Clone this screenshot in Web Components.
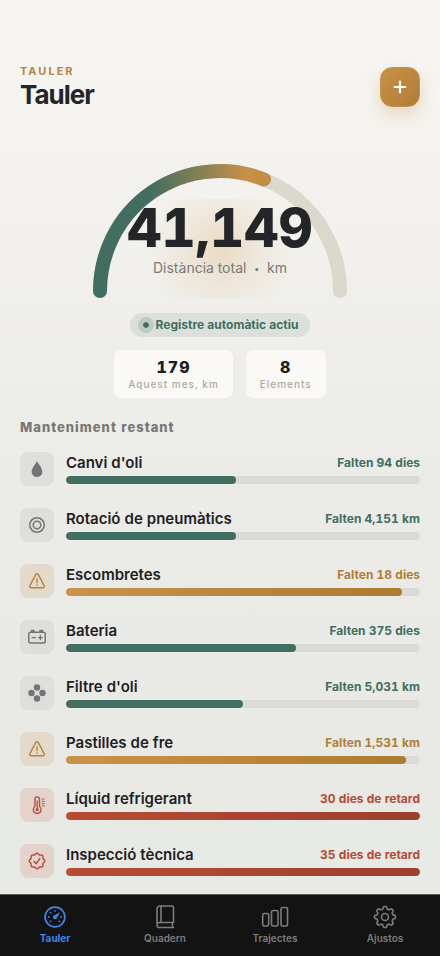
<!DOCTYPE html>
<html lang="ca">
<head>
<meta charset="utf-8">
<meta name="viewport" content="width=device-width, initial-scale=1">
<title>Tauler</title>
<style>
  :root {
    --ink: #242529;
    --green: #426d61;
    --gold: #b07e38;
    --red: #b34a36;
  }
  html { height: 100%; }
  body { margin: 0; min-height: 100%; font-family: Inter, "Liberation Sans", sans-serif; font-variant-numeric: tabular-nums; font-optical-sizing: none; color: var(--ink); background: #e9eae5; }
</style>
</head>
<body>
<dashboard-app></dashboard-app>

<script>
// Closed wavy outline with eight lobes; a higher sharpness squares the lobes off into teeth.
function lobes(radius, depth, sharpness, phase) {
  const points = [];
  for (let i = 0; i < 160; i++) {
    const a = i / 160 * Math.PI * 2;
    const wave = Math.tanh(Math.cos(8 * a + phase) * sharpness) / Math.tanh(sharpness);
    const r = radius + depth * wave;
    points.push((12 + r * Math.sin(a)).toFixed(2) + " " + (12 - r * Math.cos(a)).toFixed(2));
  }
  return "M" + points.join("L") + "Z";
}

const ICONS = {
  plus: '<path d="M12 5.500v13M5.500 12h13" stroke-width="2.600"/>',
  drop: '<path d="M12 3.200C13.500 6.500 17.800 10.800 17.800 15.200a5.800 5.600 0 0 1-11.600 0C6.200 10.800 10.500 6.500 12 3.200Z" fill="currentColor" stroke="none"/>',
  tire: '<circle cx="12" cy="12" r="7.900"/><circle cx="12" cy="12" r="4.100"/>',
  warn: '<path d="M10.700 4.700 4.200 17.200a1.500 1.500 0 0 0 1.300 2.200h13a1.500 1.500 0 0 0 1.300-2.200L13.300 4.700a1.500 1.500 0 0 0-2.600 0Z"/><path d="M12 9.500v4.300M12 16.400v.3" stroke-width="1.500"/>',
  battery: '<rect x="3" y="6.800" width="18" height="11.700" rx="2.200"/><path d="M6 6.300V5h2.700v1.300M15.300 6.300V5H18v1.300" fill="currentColor"/><path d="M6.700 12.700h3.600M13.700 12.700h4M15.700 10.700v4" stroke-width="1.500"/>',
  filter: '<g fill="currentColor" stroke="none"><circle cx="12" cy="6" r="3.500"/><circle cx="6" cy="12" r="3.500"/><circle cx="18" cy="12" r="3.500"/><circle cx="12" cy="18" r="3.500"/></g>',
  thermo: '<path d="M9.700 13.700V5.700a2.500 2.500 0 0 1 5 0v8a4.200 4.200 0 1 1-5 0Z" stroke-width="1.500"/><circle cx="12.200" cy="17" r="1.700" fill="currentColor" stroke="none"/><path d="M12.200 7.500v9" stroke-width="1.400"/><path d="M17.500 5.500h2.500M17.500 8h2.500M17.500 10.500h2.500M17.500 13h2.500" stroke-width="1"/>',
  seal: `<path d="${lobes(7.8, .7, .6, 0)}"/><path d="m8.800 12.600 2.300 2.500 4-5.800"/>`,
  gauge: '<circle cx="12" cy="12" r="9.900" stroke-width="1.700"/><path d="m17 7.300-3.300 5.900a2 2 0 1 1-2.600-2.800Z" fill="currentColor" stroke="none"/><g fill="currentColor" stroke="none"><circle cx="12" cy="5.800" r=".9"/><circle cx="7.600" cy="7.600" r=".9"/><circle cx="5.800" cy="12" r=".9"/><circle cx="7.600" cy="16.400" r=".9"/><circle cx="18.200" cy="12" r=".9"/><circle cx="16.400" cy="16.400" r=".9"/></g>',
  book: '<path d="M20.500 17.500V2.600a1.600 1.600 0 0 0-1.600-1.600H6.500A2.500 2.500 0 0 0 4 3.500v16.700A2.300 2.300 0 0 0 6.300 22.500h14.200M20.500 17.500H6.200A2.200 2.200 0 0 0 4 19.700M8 1v16.300M19.500 17.700v4.600"/>',
  bars: '<rect x="-.3" y="8.500" width="6" height="12.500" rx="1.500"/><rect x="8.500" y="5.500" width="6.500" height="15.500" rx="1.500"/><rect x="18" y="2.500" width="6.500" height="18.500" rx="1.500"/>',
  gear: `<circle cx="12" cy="12" r="3.500"/><path d="${lobes(9.3, 1.2, 2.4, 0)}"/>`
};

function define(name, build) {
  customElements.define(name, class extends HTMLElement {
    connectedCallback() {
      if (this.shadowRoot) return;
      this.attachShadow({ mode: "open" }).innerHTML = build(this);
    }
  });
}

define("app-icon", el => `
  <style>
    :host { display: inline-flex; width: 22px; height: 22px; }
    svg { width: 100%; height: 100%; overflow: visible; fill: none; stroke: currentColor; stroke-width: 1.600; stroke-linecap: round; stroke-linejoin: round; }
  </style>
  <svg viewBox="0 0 24 24" aria-hidden="true">${ICONS[el.getAttribute("name")]}</svg>`);

define("page-header", () => `
  <style>
    :host { display: flex; justify-content: space-between; align-items: center; }
    .titles { padding-top: 2px; }
    p { margin: 0; font-size: 11px; line-height: 14px; font-weight: 700; letter-spacing: 2px; color: #b5843f; text-transform: uppercase; }
    h1 { margin: 0; font-size: 26px; line-height: 34px; font-weight: 700; letter-spacing: -1px; }
    button { display: grid; place-items: center; width: 40px; height: 40px; padding: 0; border: 1px solid #c4934f; border-radius: 12px; color: #fff;
      background: linear-gradient(135deg, #c99148, #b07c34); box-shadow: 0 8px 16px rgba(200, 145, 72, .28); }
    app-icon { width: 20px; height: 20px; }
  </style>
  <div class="titles"><p>Tauler</p><h1>Tauler</h1></div>
  <button type="button" aria-label="Afegeix"><app-icon name="plus"></app-icon></button>`);

define("distance-gauge", () => `
  <style>
    :host { display: grid; justify-items: center; }
    svg, .reading { grid-area: 1 / 1; }
    svg { width: 256px; height: 136px; overflow: visible; fill: none; stroke-width: 14; stroke-linecap: round; }
    .reading { align-self: end; display: grid; justify-items: center; align-content: start; width: 200px; height: 100px; z-index: 1;
      background: radial-gradient(circle 74px at 50% 50%, rgba(222, 180, 118, .36), rgba(226, 190, 140, .17) 50%, rgba(230, 200, 150, 0)); }
    strong { font-size: 53px; line-height: 58px; font-weight: 800; }
    span { padding-top: 1px; font-size: 14px; line-height: 20px; color: #7b7a78; white-space: pre; }
    small { font-size: 10px; vertical-align: 1px; }
  </style>
  <svg viewBox="0 0 256 136" aria-hidden="true">
    <defs><linearGradient id="g" gradientUnits="userSpaceOnUse" x1="8" y1="0" x2="172" y2="0">
      <stop offset="0" stop-color="#426d61"/><stop offset=".3" stop-color="#426d61"/><stop offset=".9" stop-color="#c69149"/><stop offset="1" stop-color="#c38d43"/>
    </linearGradient></defs>
    <path d="M8 128a120 120 0 0 1 240 0" stroke="#dbd8ce"/>
    <path d="M8 128A120 120 0 0 1 172 16.400" stroke="url(#g)"/>
  </svg>
  <div class="reading"><strong>41,149</strong><span>Distància total  <small>•</small>  km</span></div>`);

define("status-pill", () => `
  <style>
    :host { display: inline-flex; align-items: center; gap: 2px; height: 24px; padding: 0 12px 0 8px; border-radius: 12px; background: #dce0db; color: var(--green); font-size: 12px; line-height: 16px; font-weight: 700; }
    i { width: 6px; height: 6px; border: 5px solid #bfccc6; border-radius: 50%; background: var(--green); background-clip: padding-box; }
  </style>
  <i></i><slot></slot>`);

define("stat-card", el => `
  <style>
    :host { display: grid; justify-items: center; box-sizing: border-box; min-width: 82px; padding: 8px 14px 7px; border: 1px solid #eeede9; border-radius: 8px; background: #faf9f6; }
    b { font-size: 16px; line-height: 18px; font-weight: 800; letter-spacing: 1px; color: #1d1e21; }
    span { padding-top: 2px; font-size: 10px; line-height: 13px; font-weight: 500; letter-spacing: 1px; color: #acaba8; }
  </style>
  <b>${el.getAttribute("value")}</b><span><slot></slot></span>`);

define("maintenance-item", el => `
  <style>
    :host { display: flex; align-items: center; gap: 12px; --tone: var(--green); --fill: #426d61; --tile: #dededb; --glyph: #737475; }
    :host([tone="gold"]) { --tone: var(--gold); --fill: linear-gradient(90deg, #c8924a, #ae7b33); --tile: #e3dacb; --glyph: #b5843f; }
    :host([tone="red"]) { --tone: var(--red); --fill: linear-gradient(90deg, #b84c35, #9c402d); --tile: #e3d3cc; --glyph: #b94e39; }
    .tile { display: grid; place-items: center; flex: none; width: 34px; height: 34px; border-radius: 8px; background: var(--tile); color: var(--glyph); }
    .body { flex: 1; display: grid; gap: 3px; padding-bottom: 1px; }
    .line { display: flex; justify-content: space-between; align-items: center; }
    h3 { margin: 0; font-size: 15px; font-weight: 600; line-height: 20px; color: #1f2023; }
    .left { font-size: 12px; font-weight: 700; color: var(--tone); line-height: 20px; }
    .track { height: 8px; border-radius: 4px; background: #dadad7; overflow: hidden; }
    .fill { height: 100%; width: ${el.getAttribute("percent")}%; border-radius: 4px; background: var(--fill); }
  </style>
  <div class="tile"><app-icon name="${el.getAttribute("icon")}"></app-icon></div>
  <div class="body">
    <div class="line"><h3><slot></slot></h3><span class="left">${el.getAttribute("left")}</span></div>
    <div class="track"><div class="fill"></div></div>
  </div>`);

define("tab-bar", () => `
  <style>
    :host { display: block; background: #131313; border-top: 1px solid #5c5c5a; position: sticky; bottom: 0; z-index: 2; }
    nav { display: grid; grid-template-columns: repeat(4, 1fr); padding: 10px 0 8px; }
  </style>
  <nav>
    <tab-link icon="gauge" active>Tauler</tab-link>
    <tab-link icon="book">Quadern</tab-link>
    <tab-link icon="bars">Trajectes</tab-link>
    <tab-link icon="gear">Ajustos</tab-link>
  </nav>`);

define("tab-link", el => `
  <style>
    :host { display: grid; color: #7c7c7c; font-size: 10px; line-height: 14px; font-weight: 600; }
    :host([active]) { color: #4285e8; font-weight: 700; }
    a { display: grid; justify-items: center; gap: 2px; padding-bottom: 3px; color: inherit; text-decoration: none; }
    app-icon { width: 24px; height: 24px; }
  </style>
  <a href="#${el.getAttribute("icon")}"><app-icon name="${el.getAttribute("icon")}"></app-icon><slot></slot></a>`);

define("dashboard-app", () => `
  <style>
    :host { display: flex; flex-direction: column; min-height: 100vh; background: linear-gradient(180deg, #f7f6f3 0, #f1f0ec 27%, #ebebe7 50%, #e7e9e4 94%); }
    main { flex: 1; padding: 62px 20px 16px; }
    distance-gauge { margin-top: 51px; }
    .center { display: flex; justify-content: center; gap: 11px; }
    .pill { margin-top: 14px; }
    .stats { margin-top: 12px; }
    h2 { margin: 19px 0 16px; font-size: 13px; line-height: 18px; font-weight: 800; letter-spacing: 1px; color: #777875; }
    .list { display: grid; gap: 22px; }
  </style>
  <main>
    <page-header></page-header>
    <distance-gauge></distance-gauge>
    <div class="center pill"><status-pill>Registre automàtic actiu</status-pill></div>
    <div class="center stats"><stat-card value="179">Aquest mes, km</stat-card><stat-card value="8">Elements</stat-card></div>
    <h2>Manteniment restant</h2>
    <div class="list">
      <maintenance-item icon="drop" percent="48" left="Falten 94 dies">Canvi d'oli</maintenance-item>
      <maintenance-item icon="tire" percent="48" left="Falten 4,151 km">Rotació de pneumàtics</maintenance-item>
      <maintenance-item icon="warn" tone="gold" percent="95" left="Falten 18 dies">Escombretes</maintenance-item>
      <maintenance-item icon="battery" percent="65" left="Falten 375 dies">Bateria</maintenance-item>
      <maintenance-item icon="filter" percent="50" left="Falten 5,031 km">Filtre d'oli</maintenance-item>
      <maintenance-item icon="warn" tone="gold" percent="96" left="Falten 1,531 km">Pastilles de fre</maintenance-item>
      <maintenance-item icon="thermo" tone="red" percent="100" left="30 dies de retard">Líquid refrigerant</maintenance-item>
      <maintenance-item icon="seal" tone="red" percent="100" left="35 dies de retard">Inspecció tècnica</maintenance-item>
    </div>
  </main>
  <tab-bar></tab-bar>`);
</script>
</body>
</html>
